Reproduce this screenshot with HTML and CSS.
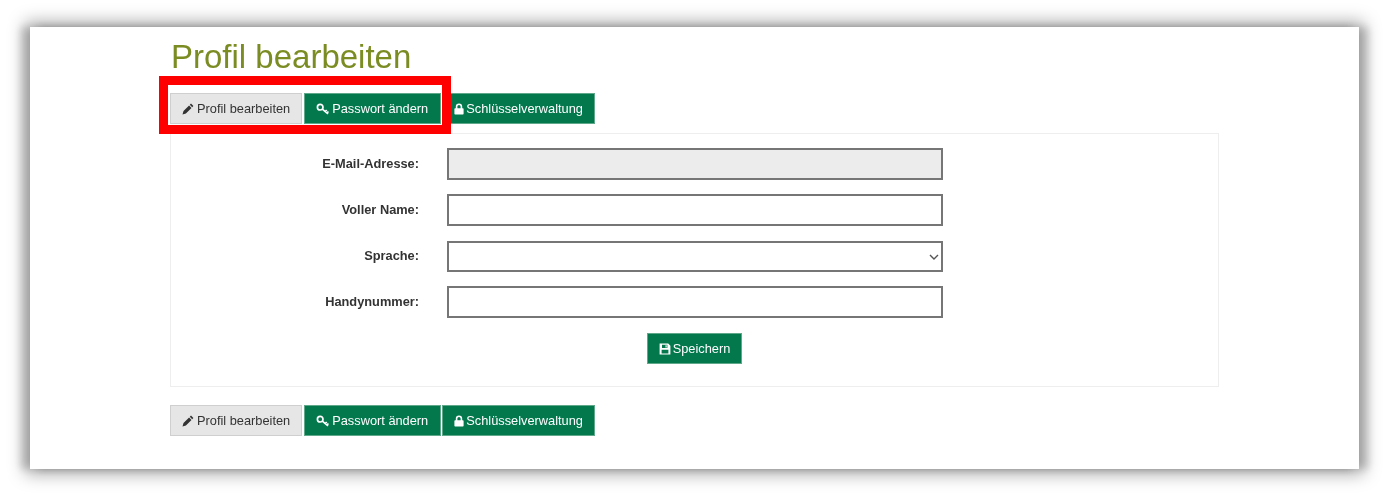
FILE: index.html
```html
<!DOCTYPE html>
<html lang="de">
<head>
  <meta charset="UTF-8">
  <meta name="viewport" content="width=device-width, initial-scale=1.0">
  <title>Profil bearbeiten</title>
  <link rel="stylesheet" href="styles.css">
</head>
<body>
  <svg class="icon-defs" aria-hidden="true">
    <symbol id="i-pencil" viewBox="0 0 12 12"><path d="M9 .6l2.400 2.400-1.200 1.200-2.400-2.400zM7.100 2.500l2.400 2.400-5.600 5.600-3.400 1 1-3.400z"/></symbol>
    <symbol id="i-key" viewBox="0 0 14 12"><circle class="key-line" cx="4.200" cy="4.200" r="2.800"/><path class="key-line" d="M6.300 6.200l5.700 4.600M9.200 8.600l1.500-1.600M11 10l1.400-1.500"/></symbol>
    <symbol id="i-lock" viewBox="0 0 10 12"><path fill-rule="evenodd" d="M5 .4a3.200 3.200 0 0 1 3.200 3.200v1.700h.7c.4 0 .7.300.7.700v4.700c0 .4-.3.700-.7.700H1.100a.7.7 0 0 1-.7-.7V6c0-.4.300-.7.700-.7h.7V3.600A3.200 3.200 0 0 1 5 .4zm0 1.500c-.9 0-1.600.8-1.600 1.700v1.700h3.200V3.600c0-.9-.7-1.700-1.600-1.700z"/></symbol>
    <symbol id="i-save" viewBox="0 0 12 12"><path fill-rule="evenodd" d="M.6.600h8.600l2.200 2.200v8.600H.6zM3 1.700v3.200h5.400V1.700zM6.500 2.200h1.200v2.200H6.500zM2.600 6.700v3.700h6.800V6.700z"/></symbol>
  </svg>

  <div class="card">
    <h1 class="title">Profil bearbeiten</h1>

    <div class="tabs">
      <a class="tab tab-current" href="#"><svg class="icon"><use href="#i-pencil"/></svg>Profil bearbeiten</a>
      <a class="tab tab-password" href="#"><svg class="icon icon-key"><use href="#i-key"/></svg>Passwort ändern</a>
      <a class="tab" href="#"><svg class="icon icon-lock"><use href="#i-lock"/></svg>Schlüsselverwaltung</a>
    </div>

    <form class="panel">
      <div class="row">
        <label class="row-label" for="email">E-Mail-Adresse:</label>
        <input class="field" id="email" type="text" disabled>
      </div>
      <div class="row">
        <label class="row-label" for="name">Voller Name:</label>
        <input class="field" id="name" type="text">
      </div>
      <div class="row">
        <label class="row-label" for="lang">Sprache:</label>
        <div class="select-wrap">
          <select class="field field-select" id="lang"><option></option></select>
          <svg class="chevron" viewBox="0 0 10 6"><path d="M1 1l4 4 4-4"/></svg>
        </div>
      </div>
      <div class="row">
        <label class="row-label" for="phone">Handynummer:</label>
        <input class="field" id="phone" type="text">
      </div>
      <div class="actions">
        <button class="tab save" type="button"><svg class="icon icon-save"><use href="#i-save"/></svg>Speichern</button>
      </div>
    </form>

    <div class="tabs">
      <a class="tab tab-current" href="#"><svg class="icon"><use href="#i-pencil"/></svg>Profil bearbeiten</a>
      <a class="tab tab-password" href="#"><svg class="icon icon-key"><use href="#i-key"/></svg>Passwort ändern</a>
      <a class="tab" href="#"><svg class="icon icon-lock"><use href="#i-lock"/></svg>Schlüsselverwaltung</a>
    </div>

    <div class="highlight"></div>
  </div>
</body>
</html>
```

FILE: styles.css
```css
body {
  margin: 0;
  padding: 27px 31px 24px 30px;
  background-color: #fff;
  font-family: "Liberation Sans", Arial, sans-serif;
  overflow: hidden;
}
.icon-defs {
  display: none;
}
.card {
  position: relative;
  height: 442px;
  box-sizing: border-box;
  padding: 10px 140px 0;
  background-color: #fff;
  box-shadow: -9px 0 8px 0 rgba(0, 0, 0, 0.15), 9px 0 8px 0 rgba(0, 0, 0, 0.15), 0 0 16px 5px rgba(0, 0, 0, 0.34);
  filter: blur(0.4px);
}
.title {
  margin: 0 0 17px 1px;
  font-size: 33px;
  line-height: 39px;
  font-weight: normal;
  color: #7a8c22;
}
.tabs {
  display: flex;
  gap: 1px;
  height: 31px;
}
.tab {
  display: flex;
  align-items: center;
  gap: 3px;
  box-sizing: border-box;
  height: 31px;
  padding: 0 11px;
  border: 1px solid #5fa98a;
  background-color: #03784d;
  color: #fff;
  font-family: inherit;
  font-size: 12.8px;
  text-decoration: none;
  white-space: nowrap;
}
.tab-current {
  margin-right: 1px;
  border-color: #cfcfcf;
  background-color: #e6e6e6;
  color: #333;
}
.tab-password {
  padding-right: 12px;
}
.icon {
  width: 12px;
  height: 12px;
  fill: currentColor;
  flex: none;
}
.icon-key {
  width: 14px;
  margin-right: -1px;
}
.icon-lock {
  width: 10px;
  margin-right: -1px;
}
.icon-save {
  margin-right: -1px;
}
.key-line {
  fill: none;
  stroke: currentColor;
  stroke-width: 1.7;
}
.panel {
  display: flex;
  flex-direction: column;
  gap: 14.25px;
  box-sizing: border-box;
  width: 1049px;
  height: 254px;
  margin: 9px 0 18px;
  padding: 14px 0 0;
  border: 1px solid #eee;
}
.row {
  display: flex;
  align-items: center;
  gap: 28px;
}
.row-label {
  width: 248px;
  padding-bottom: 1px;
  text-align: right;
  font-size: 12.8px;
  font-weight: bold;
  color: #333;
}
.field {
  display: block;
  box-sizing: border-box;
  width: 496px;
  height: 32px;
  padding: 0 8px;
  border: 2px solid #767676;
  border-radius: 0;
  background-color: #fff;
  font-family: inherit;
  font-size: 13px;
  appearance: none;
}
.field:disabled {
  background-color: #ececec;
}
.field-select {
  height: 31px;
}
.select-wrap {
  position: relative;
}
.chevron {
  position: absolute;
  top: 13px;
  right: 4px;
  width: 10px;
  height: 6px;
  fill: none;
  stroke: #555;
  stroke-width: 1.4;
}
.actions {
  display: flex;
  justify-content: center;
  margin-top: 1px;
}
.save {
  cursor: pointer;
}
.highlight {
  position: absolute;
  top: 49px;
  left: 129px;
  width: 274px;
  height: 40px;
  border: 9px solid #f00;
  pointer-events: none;
}
```
